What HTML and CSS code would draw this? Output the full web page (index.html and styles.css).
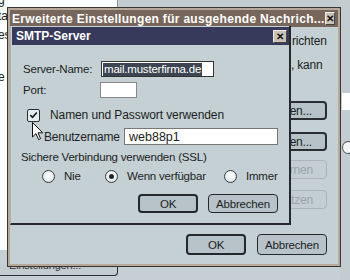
FILE: index.html
```html
<!DOCTYPE html>
<html lang="de">
<head>
<meta charset="utf-8">
<title>SMTP-Server</title>
<link rel="stylesheet" href="styles.css">
</head>
<body>
<div class="desk">
  <div class="doc">
    <div class="doc-line l1">g</div>
    <div class="doc-line l2">ta</div>
    <div class="doc-line l3">es</div>
    <div class="doc-line l4">e</div>
  </div>
  <div class="topbar"></div>
  <div class="under-right">
    <div class="ur-field"></div>
    <div class="ur-radio"></div>
  </div>
  <div class="taskbtn"><span>Einstellungen...</span></div>

  <div class="win outer">
    <div class="titlebar brown">
      <span class="ttext wide">Erweiterte Einstellungen für ausgehende Nachrich...</span>
      <span class="xbtn">✕</span>
    </div>
    <div class="outer-body">
      <div class="outer-side">
        <div class="side-text t1">richten</div>
        <div class="side-text t2">, kann</div>
        <div class="sbtn b1"><span>Bearbeiten...</span></div>
        <div class="sbtn b2"><span>Bearbeiten...</span></div>
        <div class="sbtn dis b3"><span>Entfernen</span></div>
        <div class="sbtn dis b4"><span>Zurücksetzen</span></div>
      </div>
      <div class="outer-buttons">
        <div class="btn ob ob-ok">OK</div>
        <div class="btn ob ob-cancel">Abbrechen</div>
      </div>
    </div>
  </div>

  <div class="win smtp">
    <div class="titlebar navy">
      <span class="ttext">SMTP-Server</span>
      <span class="xbtn">✕</span>
    </div>
    <div class="smtp-body">
      <div class="row r-server">
        <span class="lbl">Server-Name:</span>
        <span class="field f-server"><span class="sel">mail.musterfirma.de</span></span>
      </div>
      <div class="row r-port">
        <span class="lbl">Port:</span>
        <span class="field f-port"></span>
      </div>
      <div class="row r-check">
        <span class="check"><svg viewBox="0 0 12 12" width="12" height="12"><path d="M2.5 6.2 L5 8.6 L9.6 3.2" fill="none" stroke="#1a1d22" stroke-width="1.8"/></svg></span>
        <span class="lbl">Namen und Passwort verwenden</span>
      </div>
      <div class="row r-user">
        <span class="lbl">Benutzername</span>
        <span class="field f-user">web88p1</span>
      </div>
      <div class="row r-ssl">Sichere Verbindung verwenden (SSL)</div>
      <div class="row r-radio">
        <span class="radio"></span><span class="rl rl-nie">Nie</span>
        <span class="radio on"></span><span class="rl rl-wenn">Wenn verfügbar</span>
        <span class="radio"></span><span class="rl">Immer</span>
      </div>
      <div class="row r-btns">
        <span class="btn ok">OK</span>
        <span class="btn cancel">Abbrechen</span>
      </div>
    </div>
    <svg class="cursor" viewBox="0 0 12 19" width="12" height="19"><path d="M0.5 0.5 L0.5 15 L4 11.6 L6.6 17.6 L8.6 16.7 L6 10.8 L10.8 10.8 Z" fill="#fff" stroke="#111" stroke-width="1"/></svg>
  </div>
</div>
</body>
</html>
```

FILE: styles.css
```css
* { box-sizing: border-box; }
html, body { margin: 0; padding: 0; }
body {
  width: 350px; height: 280px; overflow: hidden;
  background: #c6d0d4;
  font-family: "Liberation Sans", Arial, sans-serif;
  font-size: 11.5px; letter-spacing: -0.2px; color: #1b1e22;
}
.desk { position: relative; width: 350px; height: 280px; }

.doc {
  position: absolute; left: 0; top: 0; width: 118px; height: 250px;
  background: #fbfcfc; border-right: 1px solid #8a9498;
}
.doc-line { position: absolute; left: -2px; font-size: 12px; color: #222; }
.doc-line.l1 { top: -7px; }
.doc-line.l2 { top: 9px; }
.doc-line.l3 { top: 28px; }
.doc-line.l4 { top: 70px; }

.topbar { position: absolute; left: 119px; top: 0; width: 231px; height: 9px; background: #c3cdd1; border-right: 2px solid #3a3f44; }

.under-right { position: absolute; left: 340px; top: 0; width: 10px; height: 280px; background: #c3cdd1; }
.ur-field { position: absolute; left: 2px; top: 93px; width: 12px; height: 17px; background: #fff; }
.ur-radio { position: absolute; left: 2px; top: 141px; width: 12px; height: 13px; border-radius: 50%; background: #f4f6f6; border: 1px solid #555; }

.taskbtn {
  position: absolute; left: -4px; top: 265px; width: 122px; height: 11px;
  background: #c3cdd1; border: 1px solid #2a2e32; border-top: none; border-radius: 0 0 4px 0;
  overflow: hidden;
}
.taskbtn span { display: block; margin: -6px 0 0 12px; font-size: 11px; color: #333; }

.win { position: absolute; background: #c5d0d4; }
.outer {
  left: 8px; top: 8px; width: 332px; height: 258px;
  border: 2px solid #b6a89a; outline: 1px solid #3a3530;
  display: flex; flex-direction: column;
}
.titlebar {
  display: flex; align-items: center; justify-content: space-between;
  color: #fff; font-weight: bold; font-size: 12px; letter-spacing: 0;
}
.titlebar.brown { background: #76665b; height: 17px; padding: 0 5px 0 2px; }
.titlebar.navy { background: #383a5c; height: 18px; padding: 0 2px 0 4px; }
.ttext { white-space: nowrap; }
.ttext.wide { letter-spacing: 0.3px; }
.xbtn {
  width: 14px; height: 13px; background: #c9c2b8; color: #111;
  border: 1px solid #f0ebe4; border-right-color: #444; border-bottom-color: #444;
  font-size: 10px; line-height: 11px; text-align: center; font-weight: bold;
}

.outer-body { flex: 1; position: relative; display: flex; flex-direction: column; }
.outer-side {
  align-self: flex-end; width: 70px; margin-right: 8px;
  display: flex; flex-direction: column; align-items: flex-start;
}
.side-text { padding-left: 32px; white-space: nowrap; font-size: 12px; line-height: 14px; }
.side-text.t1 { margin-top: 7px; }
.side-text.t2 { margin-top: 10px; padding-left: 31px; }
.sbtn {
  width: 67px; height: 19px; border: 2px solid #2a2e33; border-radius: 4px;
  background: #b7c2c8; padding-right: 13px;
  display: flex; align-items: center; justify-content: flex-end; overflow: hidden;
  font-size: 12px;
}
.sbtn span { white-space: nowrap; flex-shrink: 0; }
.sbtn.dis { border: 1px solid #aab4b9; background: #c3cdd2; color: #9aa5aa; }
.b1 { margin-top: 29px; }
.b2 { margin-top: 12px; }
.b3 { margin-top: 9px; }
.b4 { margin-top: 11px; }

.outer-buttons {
  margin-top: auto; margin-bottom: 9px; display: flex; justify-content: flex-end; gap: 11px; padding-right: 11px;
}
.btn {
  display: flex; align-items: center; justify-content: center;
  border: 2px solid #24282d; border-radius: 4px; background: #b8c3c9;
}
.ob { height: 21px; }
.ob-ok { width: 60px; }
.ob-cancel { width: 70px; border-width: 1.5px; }

.smtp {
  left: 10px; top: 26px; width: 281px; height: 199px;
  border-right: 2px solid #25292d; border-bottom: 2px solid #25292d;
  border-left: 1px solid #aab4b8;
  padding: 1px 0 0 1px;
}
.smtp-body { position: relative; padding: 0 0 0 11px; }
.row { display: flex; align-items: center; }
.r-server { margin-top: 16px; height: 16px; }
.r-server .lbl { width: 78px; }
.field { background: #fff; height: 16px; border: 1px solid #333; display: flex; align-items: center; }
.f-server { width: 113px; padding-left: 1px; }
.sel { background: #3d4552; color: #fff; line-height: 13px; padding: 0 1px; }
.r-port { margin-top: 5px; height: 16px; }
.r-port .lbl { width: 77px; }
.f-port { width: 37px; border-color: #888; }
.r-check { margin-top: 10px; height: 14px; padding-left: 4px; }
.check {
  width: 13px; height: 13px; border: 1.5px solid #2a2e33; border-radius: 2px; background: #e7ecee;
  display: flex; align-items: center; justify-content: center; margin-right: 10px;
}
.r-check .lbl { font-size: 12px; letter-spacing: -0.1px; }
.r-user { margin-top: 6px; height: 17px; padding-left: 21px; }
.r-user .lbl { width: 80px; font-size: 12px; }
.f-user { width: 154px; height: 17px; border-color: #777; padding-left: 4px; font-size: 12.5px; letter-spacing: 0; }
.r-ssl { margin-top: 5px; height: 14px; margin-left: -2px; }
.r-radio { margin-top: 4px; height: 16px; padding-left: 19px; }
.radio {
  width: 13px; height: 13px; border-radius: 50%; border: 1px solid #3a3f44;
  background: radial-gradient(circle at 50% 40%, #ffffff 0%, #e8ecee 60%, #b5bfc4 100%);
  margin-right: 9px; position: relative; flex-shrink: 0;
}
.radio.on::after {
  content: ""; position: absolute; left: 3px; top: 3px; width: 5px; height: 5px; border-radius: 50%; background: #22262a;
}
.rl { white-space: nowrap; }
.rl-nie { width: 41px; }
.rl-wenn { width: 97px; }
.r-btns { margin-top: 10px; height: 19px; padding-left: 115px; gap: 10px; }
.ok { width: 60px; height: 19px; }
.cancel { width: 70px; height: 19px; border-width: 1.5px; }

.cursor { position: absolute; left: 21px; top: 96px; }
```
